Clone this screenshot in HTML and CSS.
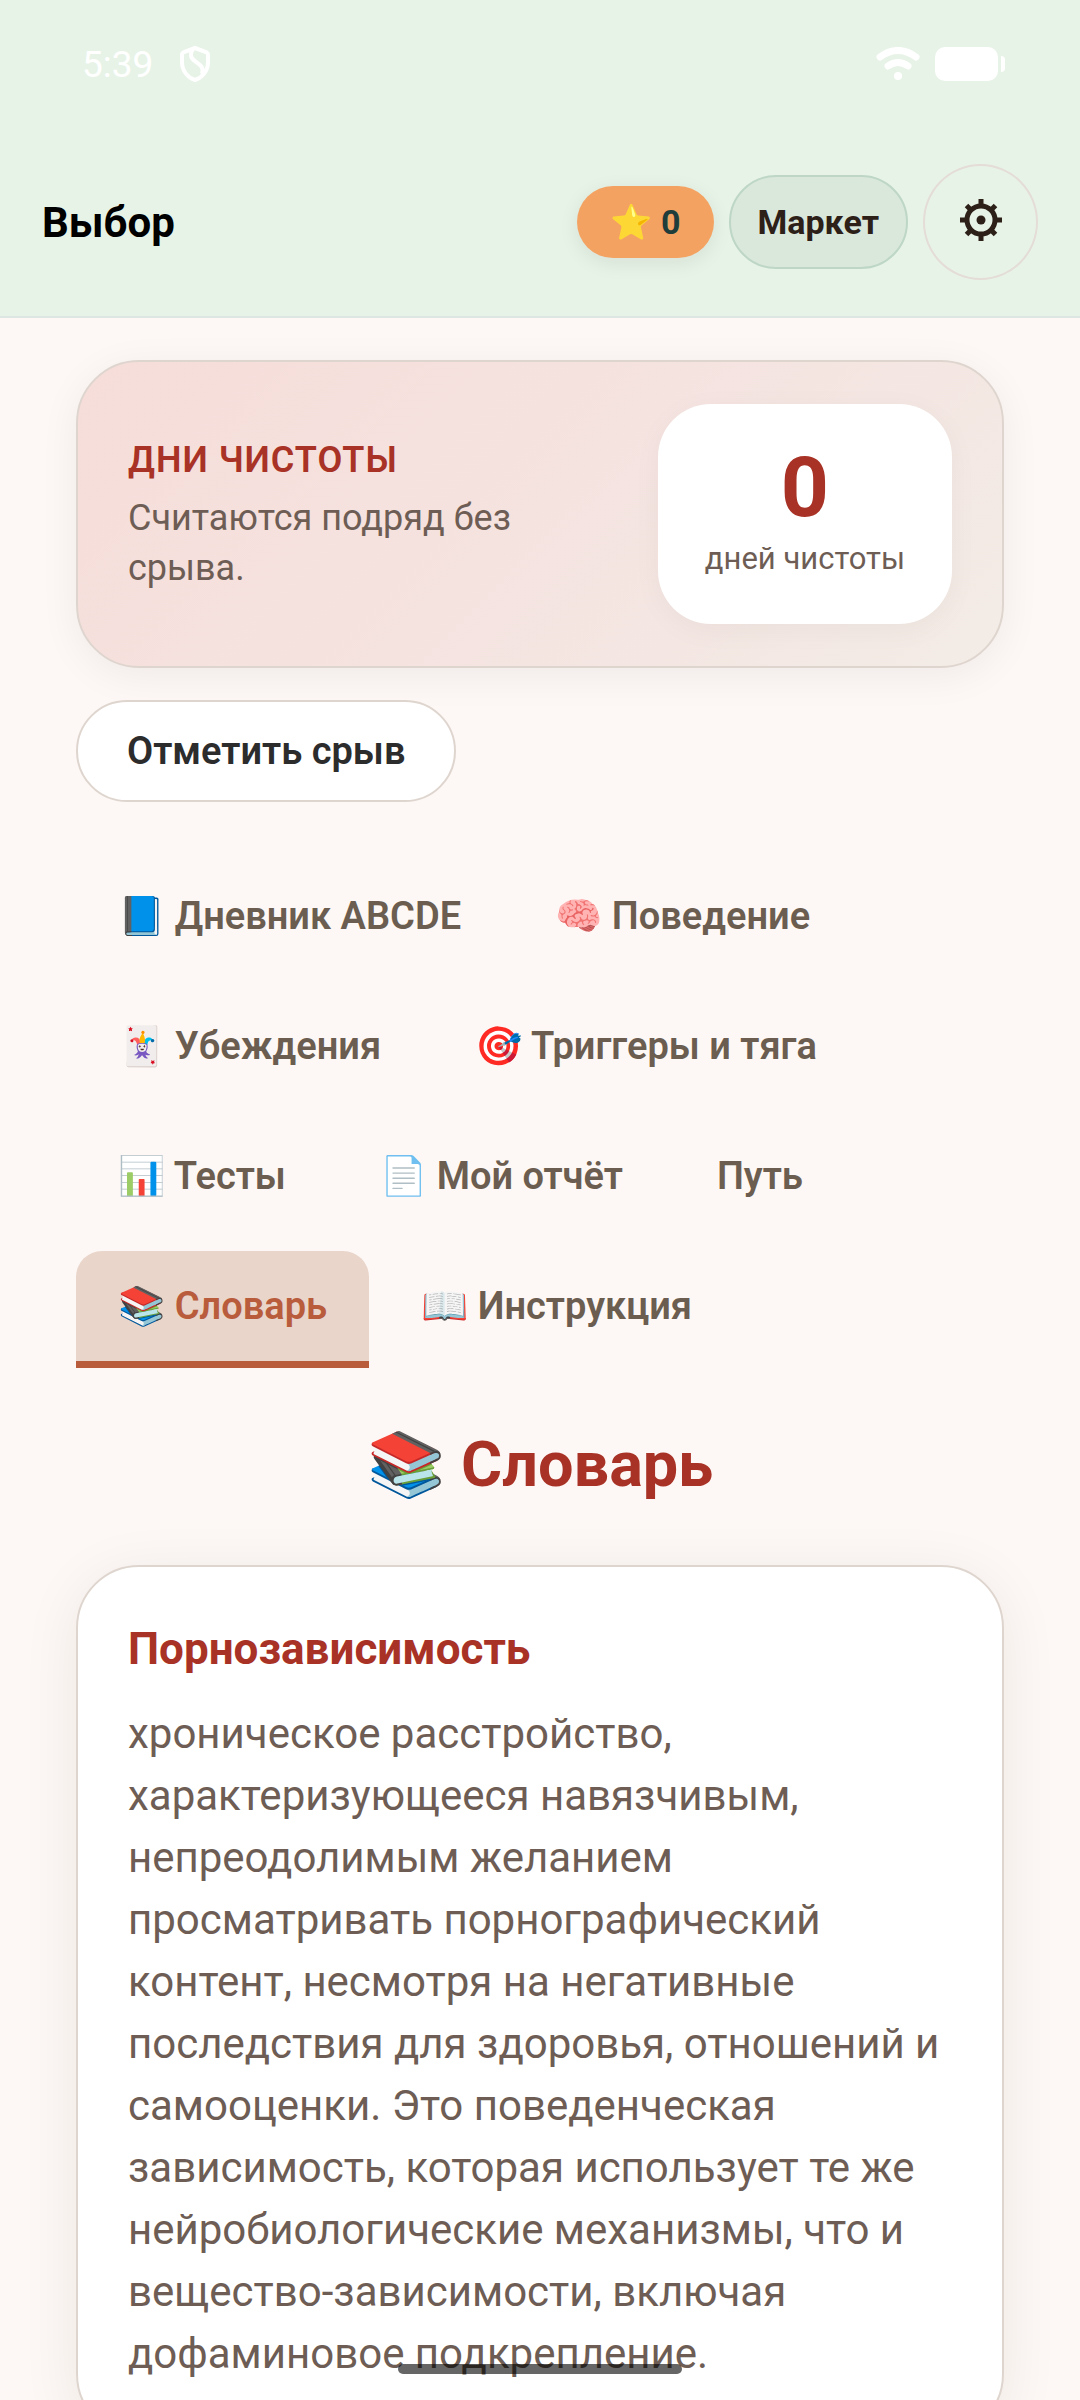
FILE: index.html
```html
<!DOCTYPE html>
<html lang="ru">
<head>
<meta charset="UTF-8">
<meta name="viewport" content="width=device-width, initial-scale=1.0">
<title>Выбор</title>
<link rel="stylesheet" href="styles.css">
</head>
<body>
<header class="header">
<div class="status-bar">
<span class="time">5:39</span>
<svg class="shield" viewBox="0 0 32 38" aria-hidden="true">
<path d="M16 3 L27 7 Q29 8 29 10 V17 C29 26 23 33 16 35 C9 33 3 26 3 17 V10 Q3 8 5 7 Z"/>
<path d="M14 4 C5 18 28 16 23 29"/>
</svg>
<svg class="wifi" viewBox="0 0 44 34" aria-hidden="true">
<path d="M4 10 Q22 -3 40 10"/>
<path d="M12 19 Q22 12 32 19"/>
<circle cx="22" cy="29" r="4"/>
</svg>
<svg class="battery" viewBox="0 0 70 34" aria-hidden="true">
<rect x="0" y="0" width="63" height="34" rx="10"/>
<path d="M66 9 Q70 9 70 13 V21 Q70 25 66 25 Z"/>
</svg>
</div>
<div class="topbar">
<h1 class="brand">Выбор</h1>
<div class="topbar-actions">
<span class="stars">⭐ 0</span>
<button class="market" type="button">Маркет</button>
<button class="settings" type="button" aria-label="Настройки">
<svg viewBox="0 0 42 42" aria-hidden="true">
<circle class="gear-ring" cx="21" cy="21" r="14"/>
<path class="gear-teeth" d="M21 0v6M21 36v6M0 21h6M36 21h6M6.500 6.500l4 4M31.500 31.500l4 4M6.500 35.500l4-4M31.500 10.500l4-4"/>
<circle class="gear-dot" cx="21" cy="21" r="4.500"/>
</svg>
</button>
</div>
</div>
</header>

<main class="content">
<section class="streak">
<div class="streak-text">
<h2>Дни чистоты</h2>
<p>Считаются подряд без срыва.</p>
</div>
<div class="streak-count">
<div class="number">0</div>
<div class="caption">дней чистоты</div>
</div>
</section>

<button class="relapse" type="button">Отметить срыв</button>

<nav class="tabs">
<button class="tab" type="button">📘 Дневник ABCDE</button>
<button class="tab" type="button">🧠 Поведение</button>
<button class="tab" type="button">🃏 Убеждения</button>
<button class="tab" type="button">🎯 Триггеры и тяга</button>
<button class="tab" type="button">📊 Тесты</button>
<button class="tab" type="button">📄 Мой отчёт</button>
<button class="tab" type="button">Путь</button>
<button class="tab active" type="button">📚 Словарь</button>
<button class="tab" type="button">📖 Инструкция</button>
</nav>

<h2 class="section-title">📚 Словарь</h2>

<article class="term">
<h3>Порнозависимость</h3>
<p>хроническое расстройство, характеризующееся навязчивым, непреодолимым желанием просматривать порнографический контент, несмотря на негативные последствия для здоровья, отношений и самооценки. Это поведенческая зависимость, которая использует те же нейробиологические механизмы, что и вещество-зависимости, включая дофаминовое подкрепление.</p>
</article>
</main>

<div class="home-bar"></div>
</body>
</html>
```
FILE: styles.css
```css
* {
box-sizing: border-box;
}
body {
margin: 0;
height: 100vh;
overflow: hidden;
display: flex;
flex-direction: column;
background: #fdf8f5;
color: #2c2c2c;
font-family: Roboto, "Noto Color Emoji", sans-serif;
font-size: 42px;
}
h1, h2, h3, p {
margin: 0;
}
button {
font-family: inherit;
cursor: pointer;
}

/* Header */
.header {
flex: none;
background: #e8f3e7;
border-bottom: 2px solid #dde6e3;
}
.status-bar {
display: flex;
align-items: center;
height: 128px;
padding: 0 75px 0 82px;
color: #fff;
font-size: 37px;
}
.status-bar svg {
fill: #fff;
}
.shield {
width: 32px;
height: 38px;
margin-left: 26px;
}
.status-bar .shield path {
fill: none;
stroke: #fff;
stroke-width: 4;
}
.wifi {
width: 44px;
height: 34px;
margin-left: auto;
}
.wifi path {
fill: none;
stroke: #fff;
stroke-width: 7;
stroke-linecap: round;
}
.battery {
width: 70px;
height: 34px;
margin-left: 15px;
}
.topbar {
display: flex;
align-items: center;
justify-content: space-between;
padding: 36px 42px;
}
.brand {
color: #000;
font-size: 42px;
font-weight: 700;
}
.topbar-actions {
display: flex;
align-items: center;
gap: 15px;
}
.stars {
padding: 0 33px;
line-height: 72px;
border-radius: 36px;
background: #f4a261;
color: #1f3d3a;
font-size: 34px;
font-weight: 700;
box-shadow: 0 5px 20px rgba(0, 0, 0, 0.08);
}
.market {
height: 94px;
padding: 0 27px;
border: 2px solid #bdd6c6;
border-radius: 47px;
background: #dae8dc;
color: #2c2018;
font-size: 34px;
font-weight: 700;
}
.settings {
display: flex;
align-items: center;
justify-content: center;
width: 115px;
height: 116px;
padding: 0 0 4px;
border: 2px solid #e4dcd6;
border-radius: 50%;
background: none;
}
.settings svg {
width: 42px;
height: 42px;
}
.gear-ring, .gear-teeth {
fill: none;
stroke: #2c2018;
stroke-width: 5;
}
.gear-dot {
fill: #2c2018;
}

/* Content */
.content {
flex: 1;
min-height: 0;
padding: 42px 76px;
}
.streak {
display: flex;
align-items: center;
justify-content: space-between;
gap: 42px;
padding: 42px 50px;
border: 2px solid #dfd5cf;
border-radius: 63px;
background: linear-gradient(135deg, #f6ddd9, #f5e3e0 50%, #f3ece6);
box-shadow: 0 8px 40px rgba(0, 0, 0, 0.06);
}
.streak-text {
max-width: 420px;
}
.streak h2 {
margin-bottom: 8px;
color: #a93226;
font-size: 36px;
font-weight: 600;
line-height: 50px;
letter-spacing: 1px;
text-transform: uppercase;
}
.streak p {
color: #6d5d54;
font-size: 36px;
line-height: 50px;
}
.streak-count {
display: flex;
flex-direction: column;
align-items: center;
height: 220px;
padding: 42px 47px;
border-radius: 53px;
background: #fff;
box-shadow: 0 6px 30px rgba(0, 0, 0, 0.04);
}
.number {
color: #a93226;
font-size: 84px;
font-weight: 700;
line-height: 84px;
}
.caption {
color: #6d5d54;
font-size: 31px;
line-height: 58px;
}
.relapse {
display: block;
height: 102px;
margin-top: 32px;
padding: 0 49px;
border: 2px solid #dfd5cf;
border-radius: 51px;
background: #fff;
color: #2c2c2c;
font-size: 38px;
font-weight: 600;
}

/* Tabs */
.tabs {
display: flex;
flex-wrap: wrap;
gap: 13px 10px;
margin-top: 59px;
}
.tab {
height: 117px;
padding: 0 42px;
border: 0;
border-bottom: 7px solid transparent;
border-radius: 26px 26px 0 0;
background: none;
color: #6b5d50;
font-size: 38px;
font-weight: 600;
}
.tab.active {
border-bottom-color: #b85c3c;
border-bottom-left-radius: 0;
border-bottom-right-radius: 0;
background-color: #e9d5ca;
color: #b85c3c;
}

/* Dictionary */
.section-title {
margin-top: 60px;
color: #a93226;
font-size: 63px;
font-weight: 700;
line-height: 74px;
text-align: center;
}
.term {
margin-top: 63px;
padding: 50px;
border: 2px solid #dfd5cf;
border-radius: 63px;
background: #fff;
box-shadow: 0 10px 60px rgba(40, 20, 10, 0.07);
}
.term h3 {
margin-bottom: 22px;
color: #a93226;
font-size: 44px;
font-weight: 700;
line-height: 64px;
}
.term p {
color: #6d5d54;
line-height: 62px;
}

.home-bar {
position: fixed;
left: 50%;
bottom: 26px;
width: 284px;
height: 10px;
margin-left: -142px;
border-radius: 5px;
background: rgba(0, 0, 0, 0.6);
}
```
